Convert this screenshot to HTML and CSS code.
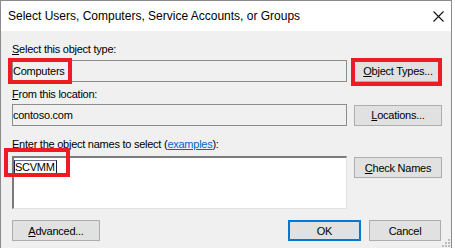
FILE: index.html
```html
<!DOCTYPE html>
<html lang="en">
<head>
  <meta charset="UTF-8">
  <title>Select Users, Computers, Service Accounts, or Groups</title>
  <link rel="stylesheet" href="styles.css">
</head>
<body>

  <div class="dialog">
    <div class="titlebar">
      <span class="title">Select Users, Computers, Service Accounts, or Groups</span>
      <svg class="close" width="11" height="11" viewBox="0 0 11 11">
        <path d="M0.5 0.5L10.5 10.5M10.5 0.5L0.5 10.5" stroke="#111" stroke-width="1.1" fill="none"/>
      </svg>
    </div>

    <div class="content">
      <div class="label label-first"><u>S</u>elect this object type:</div>
      <div class="row">
        <div class="field">Computers<span class="mark mark-type"></span></div>
        <button class="btn btn-side">
          <u>O</u>bject Types...
          <span class="mark mark-btn"></span>
        </button>
      </div>

      <div class="label label-from"><u>F</u>rom this location:</div>
      <div class="row">
        <div class="field">contoso.com</div>
        <button class="btn btn-side"><u>L</u>ocations...</button>
      </div>

      <div class="label label-enter"><u>E</u>nter the object names to select (<a class="link" href="#">examples</a>):</div>
      <div class="row row-top">
        <div class="names">
          <span class="typed">SCVMM</span>
          <span class="mark mark-names"></span>
        </div>
        <button class="btn btn-side btn-check"><u>C</u>heck Names</button>
      </div>

      <div class="footer">
        <button class="btn btn-advanced"><u>A</u>dvanced...</button>
        <div class="actions">
          <button class="btn btn-ok">OK</button>
          <button class="btn btn-cancel">Cancel</button>
        </div>
      </div>
    </div>

    <svg class="grip" width="8" height="8" viewBox="0 0 8 8">
      <rect x="6" y="0" width="2" height="2" fill="#bcbcbc"/>
      <rect x="3" y="3" width="2" height="2" fill="#bcbcbc"/>
      <rect x="6" y="3" width="2" height="2" fill="#bcbcbc"/>
      <rect x="0" y="6" width="2" height="2" fill="#bcbcbc"/>
      <rect x="3" y="6" width="2" height="2" fill="#bcbcbc"/>
      <rect x="6" y="6" width="2" height="2" fill="#bcbcbc"/>
    </svg>
  </div>

</body>
</html>
```

FILE: styles.css
```css
* {
  box-sizing: border-box;
}

body {
  margin: 0;
  background: #ffffff;
  font-family: 'Liberation Sans', Arial, sans-serif;
  font-size: 11px;
  letter-spacing: -0.25px;
  color: #000;
}

.dialog {
  position: relative;
  width: 452px;
  height: 248px;
  background: #f0f0f0;
  border: 1px solid #8a8a8a;
  border-bottom: none;
  display: flex;
  flex-direction: column;
}

.titlebar {
  height: 30px;
  background: #fff;
  display: flex;
  align-items: center;
  justify-content: space-between;
  padding: 0 7px 0 7px;
}

.title {
  font-size: 12px;
  letter-spacing: 0;
  color: #000;
}

.close {
  display: block;
}

.content {
  display: flex;
  flex-direction: column;
  padding: 0 9px 0 11px;
}

.label {
  line-height: 13px;
  white-space: nowrap;
}

.label-first { margin-top: 12px; margin-bottom: 4px; }
.label-from { margin-top: 6px; margin-bottom: 3px; }
.label-enter { margin-top: 12px; margin-bottom: 5px; }

.link {
  color: #0066cc;
  text-decoration: underline;
}

.row {
  display: flex;
  align-items: center;
  gap: 7px;
}

.row-top {
  align-items: flex-start;
}

.field {
  position: relative;
  width: 335px;
  height: 22px;
  line-height: 20px;
  border: 1px solid #8c8c8c;
  background: #f0f0f0;
  padding-left: 0;
}

.names {
  position: relative;
  width: 335px;
  height: 53px;
  background: #fff;
  border-top: 2px solid #7a7a7a;
  border-left: 2px solid #7a7a7a;
  border-right: 1px solid #e3e3e3;
  border-bottom: 1px solid #e3e3e3;
  padding: 2px 0 0 0;
  line-height: 13px;
}

.typed {
  display: inline-block;
  border: 1px solid #1c1c3c;
  border-top-color: #6a6a8a;
  padding: 0 1px 0 0;
  line-height: 12px;
}

.btn {
  position: relative;
  font-family: inherit;
  font-size: 11px;
  letter-spacing: inherit;
  color: #000;
  background: #e1e1e1;
  border: 1px solid #adadad;
  height: 21px;
  padding: 0;
  text-align: center;
}

.btn-side {
  width: 88px;
}

.btn-check {
  margin-top: 1px;
}

.footer {
  display: flex;
  justify-content: space-between;
  align-items: center;
  margin-top: 11px;
}

.btn-advanced {
  width: 88px;
}

.actions {
  display: flex;
  gap: 8px;
  padding-right: 1px;
}

.btn-ok {
  width: 73px;
  border: 2px solid #0078d7;
}

.btn-cancel {
  width: 72px;
}

/* red annotation boxes */
.mark {
  position: absolute;
  border: 4px solid #ed1c24;
  pointer-events: none;
}

.mark-type {
  left: -5px;
  top: -3px;
  width: 64px;
  height: 26px;
}

.mark-btn {
  left: -4px;
  top: -4px;
  width: 91px;
  height: 28px;
}

.mark-names {
  left: -10px;
  top: -10px;
  width: 66px;
  height: 29px;
}

.grip {
  position: absolute;
  right: 1px;
  bottom: 1px;
}
```
